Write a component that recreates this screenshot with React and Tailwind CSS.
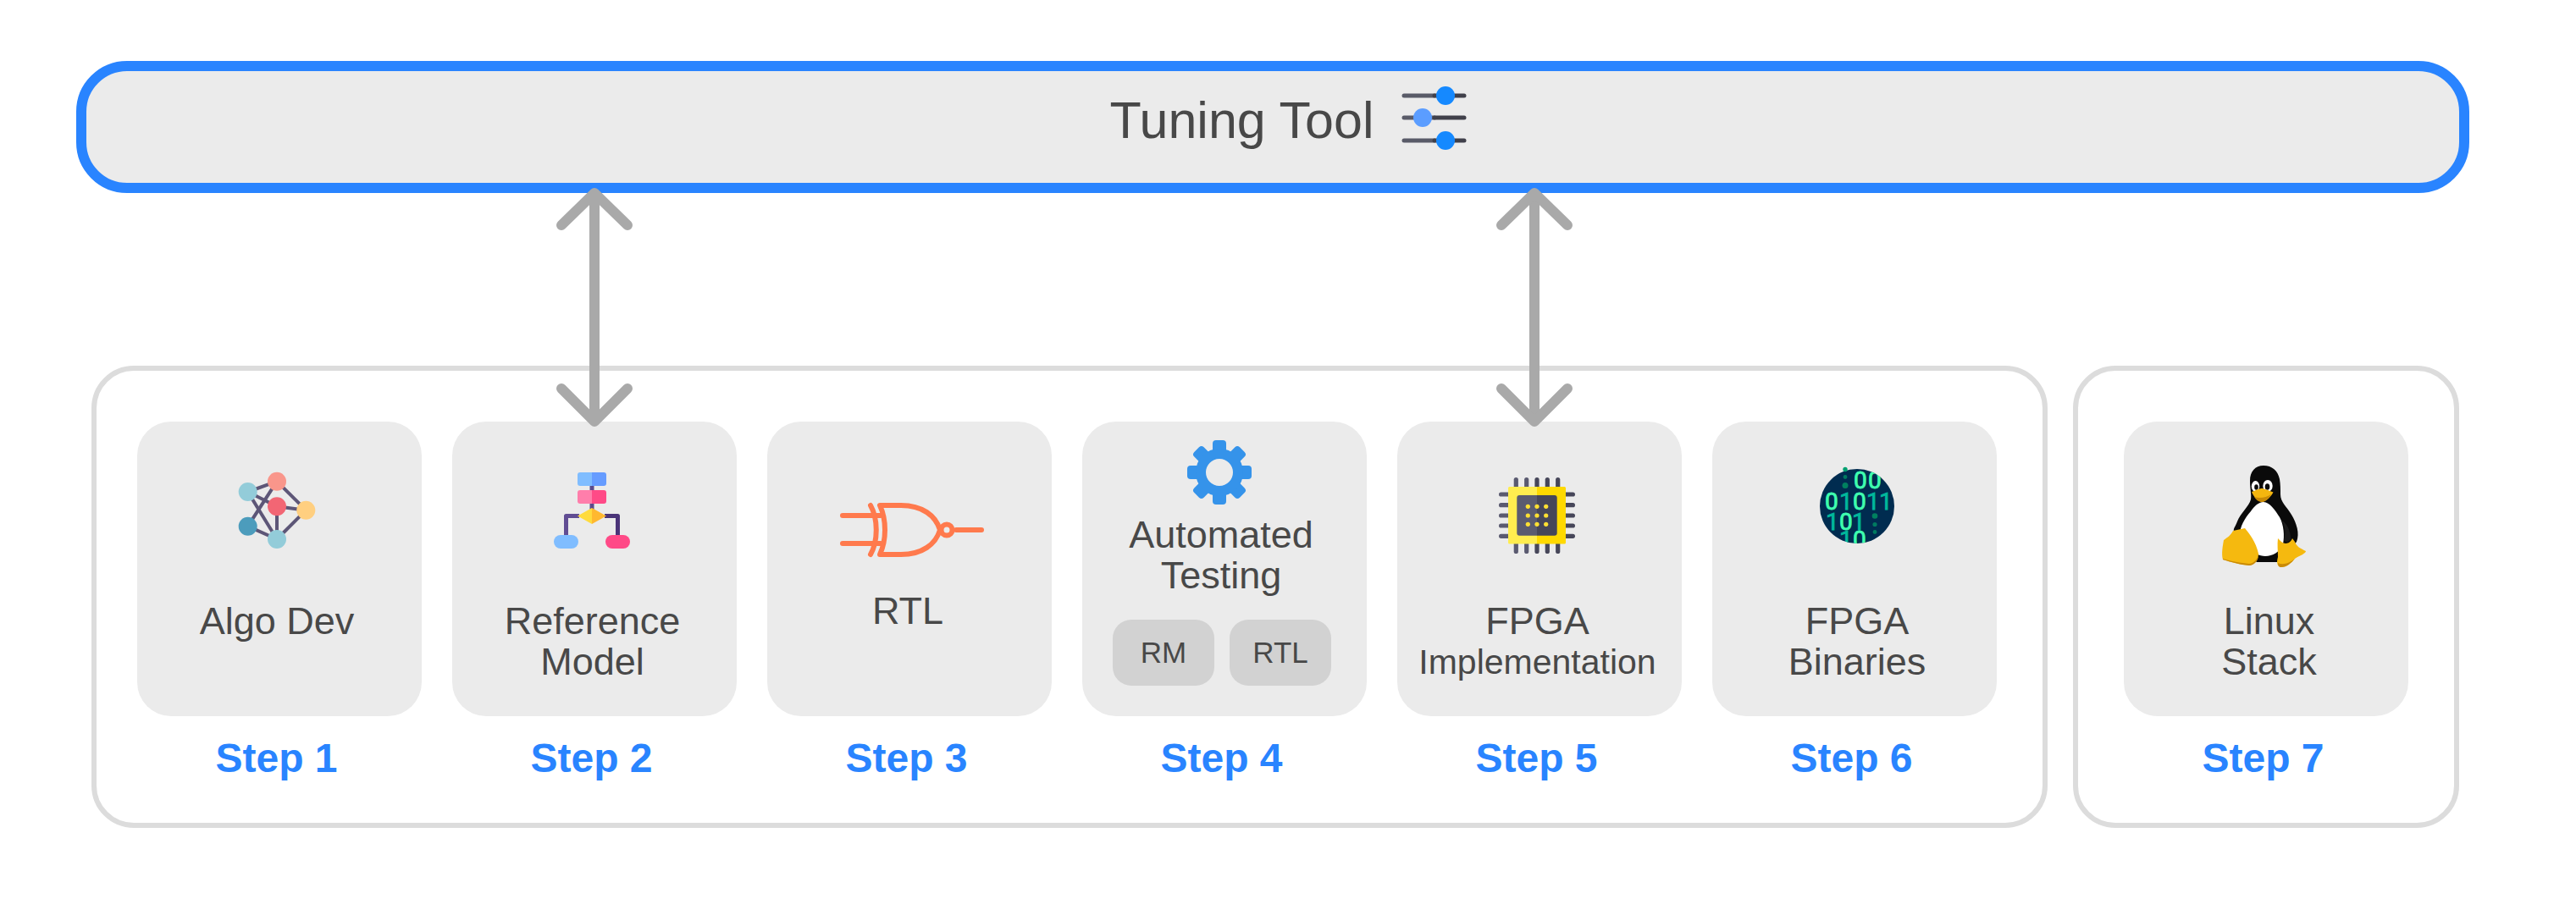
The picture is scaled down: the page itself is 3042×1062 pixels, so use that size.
const BLUE = "#2984ff";

const SliderIcon = () => (
  <svg width="80" height="80" viewBox="0 0 80 80" className="block mb-[21px]">
    {[
      [13, 53, "#1589ff"],
      [39, 26, "#5b9dff"],
      [66, 53, "#1589ff"],
    ].map(([y, x, fill]) => (
      <g key={y}>
        <line x1="4" x2="40" y1={y} y2={y} stroke="#595b68" strokeWidth="5" strokeLinecap="round" />
        <line x1="40" x2="75" y1={y} y2={y} stroke="#40404a" strokeWidth="5" strokeLinecap="round" />
        <circle cx={x} cy={y} r="11" fill={fill} />
      </g>
    ))}
  </svg>
);

const Arrow = ({ className }) => (
  <svg width="104" height="294" viewBox="0 0 104 294" fill="none" stroke="#a9a9a9" strokeWidth="12" className={className}>
    <path d="M52 12V282" />
    <path d="M13 50L52 12L91 50" strokeLinecap="round" strokeLinejoin="round" />
    <path d="M13 243L52 282L91 243" strokeLinecap="round" strokeLinejoin="round" />
  </svg>
);

const NetworkIcon = () => {
  const nodes = {
    a: [52.7, 51, "#93ccd9"],
    b: [87, 38.7, "#f9968b"],
    c: [87, 68.3, "#f26674"],
    d: [121.3, 72.7, "#ffcf80"],
    e: [52.7, 91.7, "#4c9cbc"],
    f: [87, 107, "#93ccd9"],
  };
  const edges = ["ab", "ac", "af", "be", "bd", "cd", "cf", "ef", "df"];
  return (
    <svg width="160" height="130" viewBox="0 0 160 130" className="block ml-[78px] mt-[32px]">
      {edges.map((e) => (
        <line
          key={e}
          x1={nodes[e[0]][0]}
          y1={nodes[e[0]][1]}
          x2={nodes[e[1]][0]}
          y2={nodes[e[1]][1]}
          stroke="#5d5677"
          strokeWidth="4"
        />
      ))}
      {Object.keys(nodes).map((k) => (
        <circle key={k} cx={nodes[k][0]} cy={nodes[k][1]} r="11" fill={nodes[k][2]} />
      ))}
    </svg>
  );
};

const FlowIcon = () => (
  <svg width="150" height="130" viewBox="0 0 150 130" fill="none" className="block ml-[96px] mt-[42px]">
    <rect x="66.5" y="32" width="5" height="30" fill="#5b4a8c" />
    <path d="M54 69.5H38.5V93" stroke="#614d93" strokeWidth="5" strokeLinejoin="round" />
    <path d="M84 69.5H99.5V93" stroke="#4a3478" strokeWidth="5" strokeLinejoin="round" />
    <path d="M69 18H55a3 3 0 0 0-3 3V31a3 3 0 0 0 3 3H69Z" fill="#80bdff" />
    <path d="M69 18H83a3 3 0 0 1 3 3V31a3 3 0 0 1-3 3H69Z" fill="#669cff" />
    <path d="M69 39H55a3 3 0 0 0-3 3V52a3 3 0 0 0 3 3H69Z" fill="#ff7eab" />
    <path d="M69 39H83a3 3 0 0 1 3 3V52a3 3 0 0 1-3 3H69Z" fill="#ff4a87" />
    <path d="M69 60L52 69.5L69 79Z" fill="#ffdb3d" />
    <path d="M69 60L86 69.5L69 79Z" fill="#ffb830" />
    <rect x="24" y="92" width="29" height="16" rx="8" fill="#80bdff" />
    <rect x="85" y="92" width="29" height="16" rx="8" fill="#ff4a87" />
  </svg>
);

const GateIcon = () => (
  <svg width="172" height="68" viewBox="0 0 172 68" fill="none" stroke="#ff7a4d" strokeWidth="6" strokeLinecap="round" strokeLinejoin="round" className="block ml-[86px] mt-[95px]">
    <path d="M3 16H48" />
    <path d="M3 49H48" />
    <path d="M137 33H167" />
    <path d="M36 4C45 20 45 46 36 62" />
    <path d="M47 4H72C97 4 113 16 118 33C113 50 97 62 72 62H47C55 45 55 21 47 4Z" />
    <circle cx="126" cy="33" r="6.5" />
  </svg>
);

const GearIcon = () => (
  <svg width="80" height="80" viewBox="0 0 80 80" fill="#3593ea" className="block ml-[122px] mt-[20px]">
    {[0, 45, 90, 135, 180, 225, 270, 315].map((a) => (
      <rect key={a} x="32" y="2" width="16" height="16" rx="4" transform={`rotate(${a} 40 40)`} />
    ))}
    <circle cx="40" cy="40" r="22" fill="none" stroke="#3593ea" strokeWidth="12" />
  </svg>
);

const ChipIcon = () => {
  const xs = [40.3, 52.7, 65, 77.3, 89.7];
  const ys = [34, 46.7, 59, 71, 83.3];
  const pin = (v) => (v < 65 ? "#5a5a70" : "#464659");
  return (
    <svg width="140" height="110" viewBox="0 0 140 110" className="block ml-[100px] mt-[52px]">
      {xs.map((x) => (
        <g key={x} fill={pin(x)}>
          <rect x={x - 2.6} y="14" width="5.2" height="14" rx="2.6" />
          <rect x={x - 2.6} y="90" width="5.2" height="14" rx="2.6" />
        </g>
      ))}
      {ys.map((y) => (
        <g key={y}>
          <rect x="20" y={y - 2.6} width="14" height="5.2" rx="2.6" fill="#5a5a70" />
          <rect x="96" y={y - 2.6} width="14" height="5.2" rx="2.6" fill="#464659" />
        </g>
      ))}
      <path d="M65 25H32.5a1.5 1.5 0 0 0-1.5 1.5V91a1.5 1.5 0 0 0 1.5 1.5H65Z" fill="#ffed4f" />
      <path d="M65 25H97.5a1.5 1.5 0 0 1 1.5 1.5V91a1.5 1.5 0 0 1-1.5 1.5H65Z" fill="#ffd900" />
      <path d="M65 35H44.3a3 3 0 0 0-3 3V79.7a3 3 0 0 0 3 3H65Z" fill="#5a5b70" />
      <path d="M65 35H85.7a3 3 0 0 1 3 3V79.7a3 3 0 0 1-3 3H65Z" fill="#464659" />
      {[48.3, 59, 69.3].map((y) =>
        [54.3, 65, 75.7].map((x) => <circle key={`${x}-${y}`} cx={x} cy={y} r="2.6" fill="#ffe033" />)
      )}
    </svg>
  );
};

const BinaryIcon = () => {
  const rows = [
    [37, [[59, "0"], [76, "0"]]],
    [62, [[25, "0"], [42, "1"], [58, "0"], [74, "1"], [89, "1"]]],
    [86, [[26, "1"], [42, "0"], [57, "1"]]],
    [107, [[42, "1"], [58, "0"]]],
  ];
  return (
    <svg width="140" height="120" viewBox="0 0 140 120" className="block ml-[108px] mt-[42px]">
      <defs>
        <clipPath id="binary-clip">
          <circle cx="63" cy="58" r="44" />
        </clipPath>
      </defs>
      <circle cx="63" cy="58" r="44" fill="#002c50" />
      <circle cx="49" cy="14.5" r="2.7" fill="#00a070" />
      <g clipPath="url(#binary-clip)" fontFamily="Roboto, sans-serif" fontSize="28">
        {rows.map(([y, cells]) =>
          cells.map(([x, d]) => (
            <text
              key={`${x}-${y}`}
              x={x}
              y={y}
              fill={d === "0" ? "#3fffb0" : "#00b89c"}
              stroke={d === "0" ? "#3fffb0" : "#00b89c"}
              strokeWidth="0.8"
            >
              {d}
            </text>
          ))
        )}
        <circle cx="49" cy="23.5" r="2.4" fill="#007a60" />
        <circle cx="49" cy="33.5" r="3.5" fill="#00805f" />
        <circle cx="84" cy="69.5" r="3.3" fill="#00805f" />
        <circle cx="84" cy="79.5" r="2.6" fill="#007a60" />
        <circle cx="84" cy="88.5" r="2.4" fill="#007a60" />
      </g>
    </svg>
  );
};

const TuxIcon = () => (
  <svg width="106" height="126" viewBox="0 0 106 126" className="block ml-[112px] mt-[50px]">
    <path
      d="M53 2C43 2 37 9 37 20C37 30 39 36 38 42C36 50 26 58 22 68C20 74 17 76 18 80L24 100L45 116H72L92 92C96 82 92 70 86 60C80 50 73 45 73 36C73 30 73 24 72 18C70 8 63 2 53 2Z"
      fill="#0a0a0a"
    />
    <path
      d="M53 45C47 45 42 50 38 56C31 64 25 74 25 84C25 90 30 95 37 99C41 105 48 109 55 109C64 109 72 104 76 95C78 85 77 72 72 63C67 55 60 45 53 45Z"
      fill="#ffffff"
    />
    <path d="M33 92L42 100L40 103L30 97Z" fill="#0a0a0a" />
    <path d="M77 90C80 82 78 72 74 66C80 70 85 78 85 88C85 92 80 94 77 90Z" fill="#1c1c1c" />
    <ellipse cx="43.5" cy="26.5" rx="4.7" ry="6.5" fill="#ffffff" />
    <ellipse cx="58" cy="26" rx="5.7" ry="7" fill="#ffffff" />
    <ellipse cx="44.5" cy="27.5" rx="2.3" ry="3.3" fill="#0a0a0a" />
    <ellipse cx="57.5" cy="27" rx="2.8" ry="3.8" fill="#0a0a0a" />
    <path d="M39 33C45 31 48 29 52 29C56 30 60 32 64.5 33.5C62 38 58 43 52 45C46 45 41 38 39 33Z" fill="#f4b60f" />
    <path d="M42 39C48 41 56 40 62 36C59 41 56 44 52 45C47 45 44 42 42 39Z" fill="#c98a06" />
    <path d="M17 79L31 76C36 82 44 92 47 106C47 114 42 119 36 120C26 119 14 116 5 113C3 106 5 96 6 90C10 87 14 85 17 79Z" fill="#f5b90f" />
    <path d="M70 88L74 92C78 95 84 95 87 88L90 92C92 98 97 100 103 103C103 106 96 108 90 112C86 117 80 122 74 122C69 121 68 117 70 110C70 103 69 95 70 88Z" fill="#f5b90f" />
    <path d="M5 112C14 115 26 117 36 118C40 118 45 114 47 108C47 114 42 120 36 120C26 119 14 116 5 113Z" fill="#c98a06" />
    <path d="M70 117C76 120 84 117 90 112C86 117 80 122 74 122C71 122 70 120 70 117Z" fill="#c98a06" />
  </svg>
);

const Step = ({ icon, area, label, step, children }) => (
  <div className="flex flex-col w-[336px]">
    <div className="w-[336px] h-[348px] rounded-[40px] bg-[#ebebeb] text-[#484848] text-[45px] leading-[48px] text-center">
      <div className={area}>{icon}</div>
      <div className={label}>{children}</div>
    </div>
    <div className="mt-[20px] pr-[7px] text-center text-[48px] leading-[60px] font-bold text-[#2984ff]">{step}</div>
  </div>
);

const Chip = ({ children }) => (
  <div className="flex items-center justify-center w-[120px] h-[78px] rounded-[22px] bg-[#d2d2d2] text-[35px]">{children}</div>
);

export default function App() {
  return (
    <div className="relative w-[3042px] h-[1062px] bg-white pt-[72px] pl-[90px] font-['Liberation_Sans',sans-serif]">
      <div
        style={{ borderColor: BLUE }}
        className="flex items-center justify-center gap-[31px] w-[2826px] h-[156px] pl-[38px] rounded-[60px] border-[12px] bg-[#ebebeb]"
      >
        <span className="mb-[16px] text-[61px] leading-[72px] text-[#484848]">Tuning Tool</span>
        <SliderIcon />
      </div>

      <div className="flex gap-[30px] mt-[204px] ml-[18px]">
        <div className="flex gap-[36px] w-[2310px] h-[546px] pt-[60px] pl-[48px] rounded-[50px] border-[6px] border-[#dcdcdc]">
          <Step step="Step 1" icon={<NetworkIcon />} area="flow-root h-[212px]" label="pr-[6px]">
            Algo Dev
          </Step>
          <Step step="Step 2" icon={<FlowIcon />} area="flow-root h-[212px]" label="pr-[5px]">
            Reference
            <br />
            Model
          </Step>
          <Step step="Step 3" icon={<GateIcon />} area="flow-root h-[200px]" label="pr-[4px]">
            RTL
          </Step>
          <Step step="Step 4" icon={<GearIcon />} area="flow-root h-[110px]" label="pr-[8px]">
            Automated
            <br />
            Testing
            <div className="flex gap-[18px] mt-[28px] pl-[36px]">
              <Chip>RM</Chip>
              <Chip>RTL</Chip>
            </div>
          </Step>
          <Step step="Step 5" icon={<ChipIcon />} area="flow-root h-[212px]" label="pr-[5px]">
            FPGA
            <div className="text-[41px]">Implementation</div>
          </Step>
          <Step step="Step 6" icon={<BinaryIcon />} area="flow-root h-[212px]" label="pl-[6px]">
            FPGA
            <br />
            Binaries
          </Step>
        </div>
        <div className="flex w-[456px] h-[546px] pt-[60px] pl-[54px] rounded-[50px] border-[6px] border-[#dcdcdc]">
          <Step step="Step 7" icon={<TuxIcon />} area="flow-root h-[212px]" label="pl-[7px]">
            Linux
            <br />
            Stack
          </Step>
        </div>
      </div>

      <Arrow className="absolute left-[650px] top-[216px]" />
      <Arrow className="absolute left-[1760px] top-[216px]" />
    </div>
  );
}
